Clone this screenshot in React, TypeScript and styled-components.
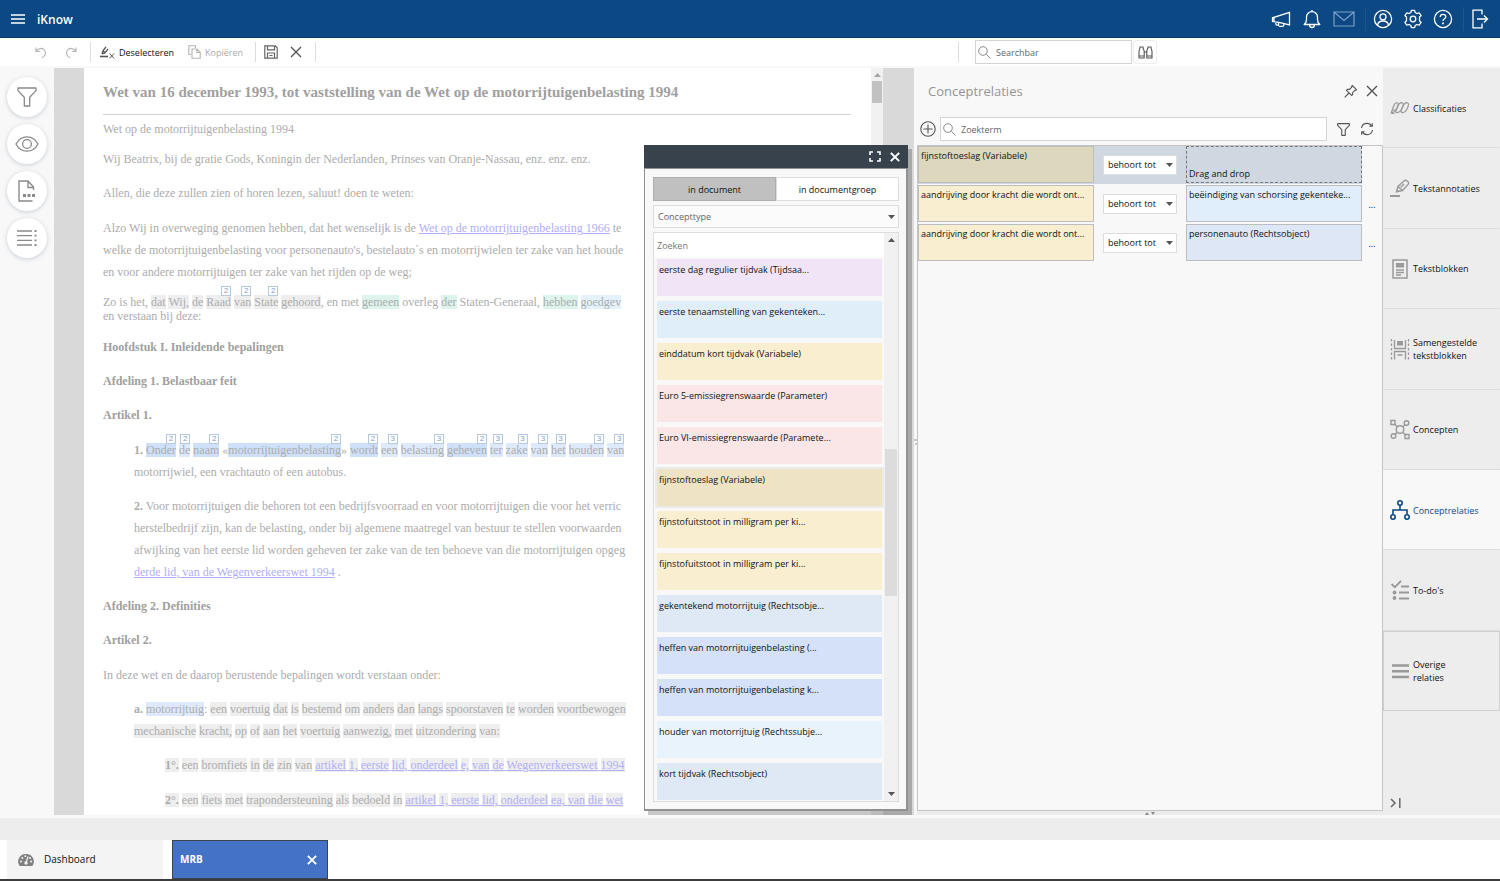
import React from 'react';
import styled, { createGlobalStyle, css } from 'styled-components';

const Global = createGlobalStyle`
  * { box-sizing: border-box; }
  body { margin: 0; background: #fff; }
  body, button, input, select {
    font-family: 'Open Sans', 'Noto Sans', sans-serif;
    font-size: 9px;
    line-height: 13px;
    color: #111;
  }
  button { border: 0; padding: 0; background: none; cursor: pointer; }
  ul { list-style: none; margin: 0; padding: 0; }
`;

/* ---------- icons ---------- */

type IconProps = { w?: number; h?: number; box?: string; sw?: number; color?: string; children: React.ReactNode };

const Svg = styled.svg`
  display: block;
  flex: none;
`;

const Icon = ({ w = 16, h, box, sw = 1, color = 'currentColor', children }: IconProps) => (
  <Svg
    width={w}
    height={h ?? w}
    viewBox={box ?? `0 0 ${w} ${h ?? w}`}
    fill="none"
    stroke={color}
    strokeWidth={sw}
    aria-hidden="true"
  >
    {children}
  </Svg>
);

const MenuIcon = () => (
  <Icon w={14} h={12} sw={1.600}><path d="M0 2h14M0 6h14M0 10h14" /></Icon>
);
const MegaphoneIcon = () => (
  <Icon w={20} h={18} sw={1.300}>
    <path d="M18.500 2.500v12.500L9 12.600 1.500 11.500V7.800L18.500 2.500ZM3 7.300v4.500M4.800 12.200v1.600c0 .8.400 1.300 1.200 1.300h1.500c.3 1 .8 1.300 1.500 1.300h2.500c.8 0 1.300-.5 1.300-1.300v-1.600M7.500 15.100v-2.600" />
  </Icon>
);
const BellIcon = () => (
  <Icon w={18} h={20} sw={1.300}>
    <path d="M9 1v1.500M1.200 15.500h15.600c-1.700-1.500-2.300-3-2.300-5V8.300C14.500 5 12 2.700 9 2.700S3.500 5 3.500 8.300v2.200c0 2-.6 3.500-2.300 5ZM6.500 15.800c0 1.700 1 2.700 2.500 2.700s2.500-1 2.500-2.700" strokeLinejoin="round" />
  </Icon>
);
const MailIcon = () => (
  <Icon w={22} h={16} sw={1.200} color="#7f9fc4"><path d="M1 1h20v14H1ZM1 1l10 8.500L21 1" /></Icon>
);
const UserIcon = () => (
  <Icon w={20} sw={1.300}>
    <circle cx="10" cy="10" r="8.600" /><circle cx="10" cy="7.800" r="3" />
    <path d="M4.600 16.300c.2-2.800 2-4.300 5.400-4.300s5.200 1.500 5.400 4.300" />
  </Icon>
);
const GearIcon = () => (
  <Icon w={20} sw={1.300}>
    <path strokeLinejoin="round" d="M8.400 1.300h3.200l.6 2.200 1.700 1 2.300-.7 1.900 2.700-1.600 1.700v3.600l1.600 1.700-1.900 2.700-2.300-.7-1.700 1-.6 2.200H8.400l-.6-2.200-1.700-1-2.300.7-1.900-2.700 1.600-1.700V8.200L1.900 6.500l1.900-2.700 2.300.7 1.700-1Z" />
    <circle cx="10" cy="10" r="2.800" />
  </Icon>
);
const HelpIcon = () => (
  <Icon w={20} sw={1.300}>
    <circle cx="10" cy="10" r="8.600" />
    <path d="M7.200 8c0-1.700 1.100-2.700 2.800-2.700s2.800 1 2.800 2.500c0 2-2.800 2-2.800 4.200" />
    <path d="M10 13.600v1.600" strokeWidth={1.800} />
  </Icon>
);
const LogoutIcon = () => (
  <Icon w={18} h={20} sw={1.300}>
    <path d="M11 5.500V1.200H2v17.600h9v-4.300M6 10h10.500M13 6.500l3.500 3.500-3.500 3.500" />
  </Icon>
);
const UndoIcon = () => (
  <Icon w={12} h={13} sw={1.200} color="#b5b5b5"><path d="M1 1.500v4h4M1.200 5.300C3.500 2 7 1.800 9 3.600c2.300 2 2.300 6-2 8.200" /></Icon>
);
const RedoIcon = () => (
  <Icon w={12} h={13} sw={1.200} color="#b5b5b5"><path d="M11 1.500v4H7M10.800 5.300C8.500 2 5 1.800 3 3.600c-2.300 2-2.300 6 2 8.200" /></Icon>
);
const DeselectIcon = () => (
  <Icon w={15} h={13} sw={1} color="#555">
    <path d="M0 10.500h8" strokeWidth={1.600} />
    <path d="M2 8 3 4.800 6 .8M3 4.800 5 6.800 8 3M2 8l3-1.200" strokeWidth={1.300} />
    <path d="m9.500 7.500 4.500 4.800M14 7.500l-4.500 4.800" />
  </Icon>
);
const CopyIcon = () => (
  <Icon w={13} h={14} sw={1.100} color="#b5b5b5">
    <path d="M3 9.500H.8V.8h6.700V3M4 4h5l3.200 3.200v6H4ZM8.800 4v3.500h3.400" />
  </Icon>
);
const SaveIcon = () => (
  <Icon w={14} sw={1.200} color="#666">
    <path d="M.8.8h10.400l2 2v10.400H.8ZM3.500.8v4h7V.8M3.500 13V8h7v5M5.500 10.500h3" />
  </Icon>
);
const CloseIcon = ({ w = 12, sw = 1.400, color = '#555' }: { w?: number; sw?: number; color?: string }) => (
  <Icon w={w} box="0 0 12 12" sw={sw} color={color}><path d="m1 1 10 10M11 1 1 11" /></Icon>
);
const SearchIcon = () => (
  <Icon w={13} sw={1} color="#8a8a8a"><circle cx="5" cy="5" r="4.300" /><path d="m8.300 8.300 4.200 4.200" /></Icon>
);
const BinocularsIcon = () => (
  <Icon w={15} h={13} sw={1.100} color="#555">
    <path d="M1 12V5.500C1 4 2 3.500 2 1h3c0 2.500 1.200 3 1.200 4.500V12ZM8.800 12V5.500C8.800 4 10 3.500 10 1h3c0 2.500 1 3 1 4.500V12ZM6.200 6h2.600M1 10h5.200M8.800 10H14" />
  </Icon>
);
const FunnelIcon = ({ w, color }: { w: number; color: string }) => (
  <Icon w={w} box="0 0 20 20" sw={w > 14 ? 1.300 : 1.700} color={color}>
    <path strokeLinejoin="round" d="M1 1h18v2.600l-6.300 6.600V19H7.300v-8.800L1 3.600Z" />
  </Icon>
);
const EyeIcon = () => (
  <Icon w={24} h={18} sw={1.300} color="#8a8a8a">
    <path d="M1 9c5-9.600 17-9.600 22 0-5 9.600-17 9.600-22 0Z" /><circle cx="12" cy="9" r="4.400" />
  </Icon>
);
const FileIcon = () => (
  <Icon w={18} h={22} sw={1.400} color="#8a8a8a">
    <path d="M14.500 21H1V1h9l5.500 6v3M10 1v6.500h5.500" />
    <path d="M5 15.500h3M9.500 15.500h3M14 15.500h3" strokeWidth={3} />
  </Icon>
);
const ListIcon = () => (
  <Icon w={20} h={18} sw={1.300} color="#8a8a8a">
    <path d="M0 2h15M0 6.600h15M0 11.400h15M0 16h15" />
    <path d="M17.500 2h2M17.500 6.600h2M17.500 11.400h2M17.500 16h2" strokeWidth={1.800} />
  </Icon>
);
const ExpandIcon = () => (
  <Icon w={12} h={11} sw={1.600} color="#fff"><path d="M1 4V1h3M8 1h3v3M11 7v3H8M4 10H1V7" /></Icon>
);
const PinIcon = () => (
  <Icon w={14} sw={1.100} color="#555">
    <path d="m8.300 1.500 4.200 4.200-1 .8-.7-.2L8.600 8.600l.1 2-1 .9L2.500 6.300l1-1 2 .1 2.300-2.300-.2-.8ZM5 9l-4.300 4.300" />
  </Icon>
);
const PlusCircleIcon = () => (
  <Icon w={16} sw={1.100} color="#555"><circle cx="8" cy="8" r="7.200" /><path d="M3.500 8h9M8 3.500v9" /></Icon>
);
const RefreshIcon = () => (
  <Icon w={14} sw={1.100} color="#555">
    <path d="M1.500 6C2 3 4.300 1.400 7 1.400c2 0 3.800 1 4.800 2.700M12.500 8c-.5 3-2.800 4.600-5.500 4.600-2 0-3.800-1-4.800-2.700M12.300 1.300v3H9.300M1.700 12.700v-3h3" />
  </Icon>
);
const CaretIcon = () => (
  <Icon w={7} h={4}><path d="M0 0h7L3.500 4Z" fill="#555" stroke="none" /></Icon>
);
const CaretUpIcon = ({ color = '#555' }: { color?: string }) => (
  <Icon w={7} h={4}><path d="M0 4h7L3.500 0Z" fill={color} stroke="none" /></Icon>
);
const GaugeIcon = () => (
  <Icon w={16} h={14}>
    <path d="M8 1a7.500 7.500 0 0 0-6.300 12h12.600A7.500 7.500 0 0 0 8 1Z" fill="#808080" stroke="none" />
    <path d="M8.300 9 10 3.500" stroke="#f4f4f4" strokeWidth={1.200} />
    <g fill="#f4f4f4" stroke="none">
      <circle cx="8" cy="10" r="1.700" /><circle cx="3" cy="8.500" r="1" /><circle cx="4.300" cy="5" r="1" />
      <circle cx="7.300" cy="3.200" r=".9" /><circle cx="12" cy="5" r="1" /><circle cx="13" cy="8.500" r="1" />
    </g>
  </Icon>
);
const CollapseIcon = () => (
  <Icon w={11} h={10} sw={1.500} color="#666"><path d="m1 1 4 4-4 4M9.800 0v10" /></Icon>
);

/* One leaning leaf, repeated three times. */
const ClassesIcon = () => (
  <Icon w={20} h={14} sw={1.200}>
    <path d="M1 12.500 3.500 5.500C4.500 2.500 6 1.500 7.200 1.800s1.300 2 .3 4.500-2.500 4.700-4.500 5H1.500" />
    <path d="M6 11.500c-.8-1 .5-4 1.500-6C9 2.500 11 1.500 12.300 1.800s1.300 2 .3 4.500-3 5-5 5.200c-.8.100-1.300.100-1.600 0Z" />
    <path d="M11.500 11.500c-.8-1 .2-4 1.200-6 1.500-3 3.500-4 4.800-3.700s1.300 2 .3 4.500-2.700 5-4.700 5.200c-.8.100-1.300.100-1.600 0Z" />
    <path d="M1.500 12.500h3M2.500 9h3" />
  </Icon>
);
const MarkerIcon = () => (
  <Icon w={20} h={19} sw={1.400}>
    <path d="M0 17h10" strokeWidth={2} />
    <path d="M6.500 12.800 8 7.500 14.500 1.500c1.200-1 4.800 1.200 4 3.500L12.500 11.500ZM8 7.500l4.500 4M10.800 8.300 14 5" />
  </Icon>
);
const BlockIcon = () => (
  <Icon w={20} sw={1.500}>
    <path d="M3 1h14v18H3Z" /><path d="M6 4h8v4.500H6Z" fill="currentColor" stroke="none" /><path d="M6 11h8M6 13.500h8M6 16h5" />
  </Icon>
);
const ComposedIcon = () => (
  <Icon w={20} h={21} sw={1.300}>
    <path d="M1.500 0v21M18.500 0v21" strokeDasharray="2.500 2" /><path d="M4.500 1v8.500h11V1M4.500 20.500V12.500h11v8M7.500 16h5" />
    <path d="M7 2h6v4.500H7Z" fill="currentColor" stroke="none" />
  </Icon>
);
const ConceptsIcon = () => (
  <Icon w={20} h={21} sw={1.400}>
    <circle cx="10" cy="10.500" r="3.800" /><path d="M1 1.500h4v4H1ZM15 15.500h4v4h-4Z" /><circle cx="16.500" cy="4" r="2.300" /><circle cx="3.500" cy="17" r="2.300" />
    <path d="m5 5.500 2.400 2.300M15 5.700l-2.300 2.200M5 15.500l2.400-2.300M15 15.500l-2.300-2.300" />
  </Icon>
);
const RelationsIcon = () => (
  <Icon w={20} sw={1.600}>
    <circle cx="10" cy="3" r="2.200" /><circle cx="3" cy="17" r="2.200" /><circle cx="17" cy="17" r="2.200" />
    <path d="M10 5.200V10M3 14.800V10h14v4.800" />
  </Icon>
);
const TodoIcon = () => (
  <Icon w={20} sw={1.800}>
    <path d="m1.500 4 3.300 3.200L11 1M11 6.500h8M9 12.500h10M9 18.500h10" />
    <circle cx="4.500" cy="12.500" r="1.900" fill="currentColor" stroke="none" /><circle cx="4.500" cy="18" r="1.900" fill="currentColor" stroke="none" />
  </Icon>
);
const BarsIcon = () => (
  <Icon w={20} h={16} sw={2.400}><path d="M2 2.500h17M2 8.200h17M2 14h17" /></Icon>
);

/* ---------- frame ---------- */

const Page = styled.div`
  display: flex;
  flex-direction: column;
  height: 100vh;
  min-height: 640px;
  background: #f8f8f8;
`;

const TopBar = styled.header`
  display: flex;
  align-items: center;
  flex: none;
  height: 38px;
  padding: 0 11px;
  gap: 10px;
  background: #0b4884;
  border-bottom: 1px solid #083a72;
  color: #fff;
  button { color: inherit; }
`;

const Brand = styled.h1`
  flex: 1;
  margin: 0;
  padding: 3px 0 0 2px;
  font-size: 12px;
  line-height: 16px;
  font-weight: 600;
`;

const TopActions = styled.div<{ $divided?: boolean }>`
  display: flex;
  align-items: center;
  gap: ${(p) => (p.$divided ? 10 : 12)}px;
  ${(p) => p.$divided && css`
    border-left: 1px solid #1d558e;
    padding-left: 7px;
    height: 24px;
  `}
`;

const ToolBar = styled.div`
  display: flex;
  align-items: stretch;
  flex: none;
  height: 28px;
  margin-bottom: 2px;
  background: #fff;
`;

const Tools = styled.div`
  display: flex;
  align-items: center;
  flex: 1;
`;

const ToolGroup = styled.div<{ $gap: number; $start: number; $end: number }>`
  display: flex;
  align-items: center;
  height: 20px;
  gap: ${(p) => p.$gap}px;
  padding: 0 ${(p) => p.$end}px 0 ${(p) => p.$start}px;
  border-right: 1px solid #ddd;
`;

const ToolSearch = styled.div`
  display: flex;
  align-items: center;
  gap: 1px;
  flex: 0 0 542px;
  &::before {
    content: '';
    height: 20px;
    margin-right: 15px;
    border-left: 1px solid #ddd;
  }
`;

const ToolButton = styled.button<{ $muted?: boolean }>`
  display: flex;
  align-items: center;
  gap: 4px;
  color: ${(p) => (p.$muted ? '#aaa' : '#111')};
`;

const SearchField = styled.label<{ $w?: number }>`
  display: flex;
  align-items: center;
  gap: 5px;
  height: 24px;
  padding: 0 2px;
  border: 1px solid #d5d5d5;
  background: #fff;
  ${(p) => (p.$w ? `width: ${p.$w}px;` : 'flex: 1;')}
  input {
    flex: 1;
    min-width: 0;
    border: 0;
    padding: 0;
    outline: 0;
    background: none;
  }
  input::placeholder { color: #666; opacity: 1; }
`;

const ScopeButton = styled.button`
  display: grid;
  place-items: center;
  width: 24px;
  height: 24px;
  border: 1px solid #eee;
  border-radius: 3px;
`;

const Main = styled.main`
  display: flex;
  flex: 1;
  min-height: 0;
`;

const Rail = styled.nav`
  display: flex;
  flex-direction: column;
  align-items: center;
  gap: 7px;
  flex: 0 0 54px;
  padding-top: 9px;
`;

const RailButton = styled.button`
  display: grid;
  place-items: center;
  width: 40px;
  height: 40px;
  border-radius: 50%;
  background: #fff;
  box-shadow: 0 1px 4px rgba(60, 80, 110, 0.25);
`;

/* ---------- document ---------- */

const DocArea = styled.section`
  position: relative;
  display: flex;
  flex: 1;
  min-width: 0;
  padding: 0 31px 0 30px;
  background: #d9d9d9;
`;

const Paper = styled.article`
  flex: 1;
  min-width: 0;
  overflow: hidden;
  padding: 13px 20px 0 19px;
  background: #fff;
  font-family: 'Liberation Serif', 'Times New Roman', serif;
  font-size: 12px;
  line-height: 22px;
  color: #acacac;
  white-space: nowrap;
`;

const DocTitle = styled.h2`
  margin: 0 0 3px;
  padding-bottom: 11px;
  border-bottom: 1px solid #d2d2d2;
  font-size: 15px;
  line-height: 22px;
  color: #a0a0a0;
`;

const Para = styled.p<{ $level?: number; $tight?: boolean; $gap?: number }>`
  margin: 0 0 ${(p) => p.$gap ?? 12}px ${(p) => (p.$level ?? 0) * 31}px;
  ${(p) => p.$tight && 'line-height: 14px;'}
`;

const DocHeading = styled.h3<{ $gap?: number }>`
  margin: 0 0 ${(p) => p.$gap ?? 12}px;
  font-size: 12px;
  line-height: 22px;
  color: #a0a0a0;
`;

const DocLink = styled.a`
  color: #b0aef6;
  text-decoration: underline;
`;

const tones = {
  grey: '#eeeeee',
  green: '#dcf4ec',
  sky: '#e4f2fb',
  blue: '#cfe0fa',
  pale: '#deeafb',
};
type Tone = keyof typeof tones;

const Mark = styled.span<{ $tone: Tone }>`
  position: relative;
  background: ${(p) => tones[p.$tone]};
`;

const CountBadge = styled.sup`
  position: absolute;
  right: 0;
  top: -9px;
  width: 10px;
  height: 10px;
  border: 1px solid #b4c8e0;
  background: #fff;
  font: 8px/8px 'Liberation Sans', Arial, sans-serif;
  text-align: center;
  color: #7fa0cc;
`;

/* Wraps every word in its own highlight; "word^2" adds a count badge. */
const Marked = ({ tone, text }: { tone: Tone; text: string }) => (
  <>
    {text.split(' ').map((word, i) => {
      const [label, count] = word.split('^');
      return (
        <React.Fragment key={i}>
          {i > 0 && ' '}
          <Mark $tone={tone}>
            {label}
            {count && <CountBadge>{count}</CountBadge>}
          </Mark>
        </React.Fragment>
      );
    })}
  </>
);

const ScrollTrack = styled.div<{ $w: number; $thumbTop: number; $thumb: number; $thumbColor: string }>`
  display: flex;
  flex-direction: column;
  align-items: center;
  justify-content: space-between;
  flex: 0 0 ${(p) => p.$w}px;
  padding: 5px 0;
  background:
    linear-gradient(${(p) => p.$thumbColor}, ${(p) => p.$thumbColor}) center ${(p) => p.$thumbTop}px / calc(100% - 2px) ${(p) => p.$thumb}px no-repeat,
    #f1f1f1;
`;

/* ---------- concept dialog ---------- */

const Dialog = styled.div`
  position: absolute;
  top: 77px;
  right: 6px;
  bottom: 4px;
  display: flex;
  flex-direction: column;
  width: 264px;
  border: 1px solid #8f9295;
  border-width: 0 2px 2px 1px;
  background: #f8f8f8;
  box-shadow: 4px 4px 0 rgba(0, 0, 0, 0.22);
`;

const DialogBar = styled.div`
  display: flex;
  align-items: center;
  justify-content: flex-end;
  gap: 9px;
  flex: none;
  height: 24px;
  margin: 0 -2px 0 -1px;
  padding-right: 8px;
  background: #37424c;
  border-bottom: 1px solid #8f9295;
`;

const DialogBody = styled.div`
  display: flex;
  flex-direction: column;
  flex: 1;
  gap: 4px;
  min-height: 0;
  padding: 8px 7px 7px 8px;
`;

const TabRow = styled.div`
  display: grid;
  grid-template-columns: 1fr 1fr;
  flex: none;
  height: 24px;
`;

const Tab = styled.button<{ $on?: boolean }>`
  border: 1px solid ${(p) => (p.$on ? '#adadad' : '#ddd')};
  background: ${(p) => (p.$on ? '#c0c0c0' : '#fff')};
`;

const SelectBox = styled.div<{ $muted?: boolean; $h: number }>`
  position: relative;
  display: flex;
  align-items: center;
  flex: none;
  height: ${(p) => p.$h}px;
  border: 1px solid #ddd;
  background: ${(p) => (p.$muted ? '#fbfbfb' : '#fff')};
  select {
    appearance: none;
    width: 100%;
    height: 100%;
    border: 0;
    padding: 0 4px;
    outline: 0;
    background: none;
    color: ${(p) => (p.$muted ? '#666' : '#111')};
  }
  svg {
    position: absolute;
    right: 3px;
    pointer-events: none;
  }
`;

const ListFrame = styled.div`
  display: flex;
  flex: 1;
  min-height: 0;
  border: 1px solid #ddd;
`;

const ListColumn = styled.div`
  display: flex;
  flex-direction: column;
  flex: 1;
  min-width: 0;
  overflow: hidden;
`;

const ListSearch = styled.input`
  flex: none;
  width: 100%;
  height: 24px;
  border: 0;
  padding: 0 3px;
  outline: 0;
  background: #fff;
  &::placeholder { color: #777; opacity: 1; }
`;

const ConceptList = styled.ul`
  display: flex;
  flex-direction: column;
  gap: 5px;
  padding: 2px 2px 0 3px;
`;

const ConceptItem = styled.li<{ $bg: string; $on?: boolean }>`
  flex: none;
  height: 37px;
  padding: 4px 2px;
  background: ${(p) => p.$bg};
  ${(p) => p.$on && 'box-shadow: 0 0 0 2px #ebebeb;'}
`;

/* ---------- relations panel ---------- */

const Splitter = styled.div`
  display: flex;
  flex-direction: column;
  align-items: center;
  justify-content: center;
  flex: 0 0 3px;
`;

const HSplitter = styled.div`
  display: flex;
  align-items: center;
  justify-content: center;
  flex: 0 0 4px;
  background: #ebebeb;
`;

const Panel = styled.section`
  display: flex;
  flex-direction: column;
  flex: 0 0 466px;
`;

const PanelHead = styled.div`
  display: flex;
  align-items: center;
  gap: 8px;
  height: 45px;
  padding: 0 5px 0 11px;
`;

const PanelTitle = styled.h2`
  flex: 1;
  margin: 0;
  font-size: 13px;
  line-height: 18px;
  font-weight: 400;
  color: #959595;
`;

const PanelSearch = styled.div`
  display: flex;
  align-items: center;
  height: 32px;
  gap: 10px;
  padding: 0 9px 0 3px;
`;

const FieldPair = styled.div`
  display: flex;
  align-items: center;
  flex: 1;
  gap: 4px;
`;

const Relations = styled.ul`
  display: flex;
  flex-direction: column;
  flex: 1;
  gap: 1px;
  border: 1px solid #c4c4c4;
`;

const Relation = styled.li`
  display: grid;
  grid-template-columns: 1fr 20px;
  align-items: center;
`;

const RelationBody = styled.div<{ $on?: boolean }>`
  display: grid;
  grid-template-columns: 1fr 74px 1fr;
  align-items: center;
  column-gap: 9px;
  height: 38px;
  padding-bottom: 1px;
  background: ${(p) => (p.$on ? '#cfd8e0' : 'transparent')};
`;

const Term = styled.div<{ $bg: string; $drop?: boolean }>`
  display: flex;
  align-items: ${(p) => (p.$drop ? 'flex-end' : 'flex-start')};
  height: 37px;
  min-width: 0;
  padding: 2px;
  border: 1px ${(p) => (p.$drop ? 'dashed #777' : 'solid #bdbdbd')};
  background: ${(p) => p.$bg};
  white-space: nowrap;
  overflow: hidden;
`;

const MoreButton = styled.button`
  height: 20px;
`;

/* ---------- side tabs ---------- */

const Side = styled.aside`
  display: flex;
  flex-direction: column;
  justify-content: space-between;
  flex: 0 0 117px;
  background: #ededed;
`;

const SideTabs = styled.nav`
  display: flex;
  flex-direction: column;
  height: 643px;
`;

const SideTab = styled.button<{ $on?: boolean; $boxed?: boolean }>`
  display: flex;
  align-items: center;
  flex: 1;
  gap: 3px;
  padding: 0 6px;
  text-align: left;
  border: 1px solid ${(p) => (p.$boxed ? '#d0d0d0' : 'transparent')};
  border-bottom-color: ${(p) => (p.$boxed ? '#d0d0d0' : '#dcdcdc')};
  background: ${(p) => (p.$on ? '#f8f8f8' : 'transparent')};
  color: ${(p) => (p.$on ? '#0b4884' : '#111')};
  span { width: min-content; white-space: normal; }
  svg { color: ${(p) => (p.$on ? '#0b4884' : '#999')}; }
`;

const CollapseButton = styled.button`
  align-self: flex-start;
  padding: 7px;
`;

/* ---------- footer ---------- */

const StatusStrip = styled.div`
  flex: none;
  height: 22px;
  margin-top: 3px;
  background: #ededed;
`;

const TaskBar = styled.footer`
  display: flex;
  flex: none;
  gap: 9px;
  height: 41px;
  padding-left: 7px;
  background: #fff;
  border-bottom: 2px solid #3c3c3c;
`;

const Task = styled.div<{ $on?: boolean }>`
  display: flex;
  align-items: center;
  gap: 10px;
  width: 156px;
  padding: 0 10px 0 ${(p) => (p.$on ? 7 : 11)}px;
  background: ${(p) => (p.$on ? '#4472c4' : '#f4f4f4')};
  ${(p) => p.$on && css`
    border: 1px solid #3c4450;
    color: #fff;
    font-weight: 700;
    justify-content: space-between;
  `}
`;

const TaskLink = styled.button`
  color: inherit;
  font-weight: inherit;
  font-size: 10px;
`;

/* ---------- data ---------- */

const concepts = [
  { name: 'eerste dag regulier tijdvak (Tijdsaa...', bg: '#f0e4f6' },
  { name: 'eerste tenaamstelling van gekenteken...', bg: '#e0eefa' },
  { name: 'einddatum kort tijdvak (Variabele)', bg: '#f9eecf' },
  { name: 'Euro 5-emissiegrenswaarde (Parameter)', bg: '#fae6e7' },
  { name: 'Euro VI-emissiegrenswaarde (Paramete...', bg: '#fae6e7' },
  { name: 'fijnstoftoeslag (Variabele)', bg: '#eee3c5', on: true },
  { name: 'fijnstofuitstoot in milligram per ki...', bg: '#f9eecf' },
  { name: 'fijnstofuitstoot in milligram per ki...', bg: '#f9eecf' },
  { name: 'gekentekend motorrijtuig (Rechtsobje...', bg: '#dee9f5' },
  { name: 'heffen van motorrijtuigenbelasting (...', bg: '#d4e1f9' },
  { name: 'heffen van motorrijtuigenbelasting k...', bg: '#d4e1f9' },
  { name: 'houder van motorrijtuig (Rechtssubje...', bg: '#e9f3fb' },
  { name: 'kort tijdvak (Rechtsobject)', bg: '#dee9f5' },
];

const relations = [
  { from: 'fijnstoftoeslag (Variabele)', fromBg: '#dcd7bd', to: 'Drag and drop', toBg: '#cfd8e0', on: true },
  { from: 'aandrijving door kracht die wordt ont...', fromBg: '#f9eecf', to: 'beëindiging van schorsing gekenteke...', toBg: '#dfeefa' },
  { from: 'aandrijving door kracht die wordt ont...', fromBg: '#f9eecf', to: 'personenauto (Rechtsobject)', toBg: '#dde7f5' },
];

const sideTabs = [
  { label: 'Classificaties', icon: <ClassesIcon /> },
  { label: 'Tekstannotaties', icon: <MarkerIcon /> },
  { label: 'Tekstblokken', icon: <BlockIcon /> },
  { label: 'Samengestelde tekstblokken', icon: <ComposedIcon /> },
  { label: 'Concepten', icon: <ConceptsIcon /> },
  { label: 'Conceptrelaties', icon: <RelationsIcon />, on: true },
  { label: 'To\u2011do\'s', icon: <TodoIcon /> },
  { label: 'Overige relaties', icon: <BarsIcon />, boxed: true },
];

const LawText = () => (
  <Paper>
    <DocTitle>Wet van 16 december 1993, tot vaststelling van de Wet op de motorrijtuigenbelasting 1994</DocTitle>
    <Para $gap={8}>Wet op de motorrijtuigenbelasting 1994</Para>
    <Para>Wij Beatrix, bij de gratie Gods, Koningin der Nederlanden, Prinses van Oranje-Nassau, enz. enz. enz.</Para>
    <Para $gap={13}>Allen, die deze zullen zien of horen lezen, saluut! doen te weten:</Para>
    <Para>
      Alzo Wij in overweging genomen hebben, dat het wenselijk is de{' '}
      <DocLink href="#wet-1966">Wet op de motorrijtuigenbelasting 1966</DocLink> te<br />
      welke de motorrijtuigenbelasting voor personenauto's, bestelauto´s en motorrijwielen ter zake van het houde<br />
      en voor andere motorrijtuigen ter zake van het rijden op de weg;
    </Para>
    <Para $tight $gap={13}>
      Zo is het, <Marked tone="grey" text="dat Wij, de Raad^2 van^2 State^2 gehoord" />, en met{' '}
      <Marked tone="green" text="gemeen" /> overleg <Marked tone="green" text="der" /> Staten-Generaal,{' '}
      <Marked tone="green" text="hebben" /> <Marked tone="sky" text="goedgev" /><br />
      en verstaan bij deze:
    </Para>
    <DocHeading>Hoofdstuk I. Inleidende bepalingen</DocHeading>
    <DocHeading>Afdeling 1. Belastbaar feit</DocHeading>
    <DocHeading $gap={13}>Artikel 1.</DocHeading>
    <Para $level={1}>
      <b>1.</b> <Marked tone="blue" text="Onder^2" /> <Marked tone="pale" text="de^2" />{' '}
      <Marked tone="blue" text="naam^2" /> «<Marked tone="blue" text="motorrijtuigenbelasting^2" />»{' '}
      <Marked tone="blue" text="wordt^2" /> <Marked tone="pale" text="een^3 belasting^3" />{' '}
      <Marked tone="blue" text="geheven^2" /> <Marked tone="pale" text="ter^3 zake^3 van^3 het^3 houden^3 van^3" /><br />
      motorrijwiel, een vrachtauto of een autobus.
    </Para>
    <Para $level={1}>
      <b>2.</b> Voor motorrijtuigen die behoren tot een bedrijfsvoorraad en voor motorrijtuigen die voor het verric<br />
      herstelbedrijf zijn, kan de belasting, onder bij algemene maatregel van bestuur te stellen voorwaarden<br />
      afwijking van het eerste lid worden geheven ter zake van de ten behoeve van die motorrijtuigen opgeg<br />
      <DocLink href="#wegenverkeerswet">derde lid, van de Wegenverkeerswet 1994</DocLink> .
    </Para>
    <DocHeading>Afdeling 2. Definities</DocHeading>
    <DocHeading $gap={13}>Artikel 2.</DocHeading>
    <Para>In deze wet en de daarop berustende bepalingen wordt verstaan onder:</Para>
    <Para $level={1}>
      <b>a.</b> <Marked tone="pale" text="motorrijtuig" />:{' '}
      <Marked tone="grey" text="een voertuig dat is bestemd om anders dan langs spoorstaven te worden voortbewogen" /><br />
      <Marked tone="grey" text="mechanische kracht, op of aan het voertuig aanwezig, met uitzondering van:" />
    </Para>
    <Para $level={2} $gap={13}>
      <b><Marked tone="grey" text="1°." /></b> <Marked tone="grey" text="een bromfiets in de zin van" />{' '}
      <DocLink href="#artikel-1e"><Marked tone="grey" text="artikel 1, eerste lid, onderdeel e, van de Wegenverkeerswet 1994" /></DocLink>
    </Para>
    <Para $level={2}>
      <b><Marked tone="grey" text="2°." /></b> <Marked tone="grey" text="een fiets met trapondersteuning als bedoeld in" />{' '}
      <DocLink href="#artikel-1ea"><Marked tone="grey" text="artikel 1, eerste lid, onderdeel ea, van die wet" /></DocLink>
    </Para>
  </Paper>
);

const ConceptDialog = () => (
  <Dialog role="dialog" aria-label="Concepten">
    <DialogBar>
      <button aria-label="Maximaliseren"><ExpandIcon /></button>
      <button aria-label="Sluiten"><CloseIcon w={10} sw={2.400} color="#fff" /></button>
    </DialogBar>
    <DialogBody>
      <TabRow role="tablist">
        <Tab role="tab" aria-selected $on>in document</Tab>
        <Tab role="tab" aria-selected={false}>in documentgroep</Tab>
      </TabRow>
      <SelectBox $h={23} $muted>
        <select aria-label="Concepttype"><option>Concepttype</option></select>
        <CaretIcon />
      </SelectBox>
      <ListFrame>
        <ListColumn>
          <ListSearch aria-label="Zoeken" placeholder="Zoeken" />
          <ConceptList>
            {concepts.map((c, i) => (
              <ConceptItem key={i} $bg={c.bg} $on={c.on}>{c.name}</ConceptItem>
            ))}
          </ConceptList>
        </ListColumn>
        <ScrollTrack $w={14} $thumbTop={216} $thumb={147} $thumbColor="#dcdcdc">
          <CaretUpIcon />
          <CaretIcon />
        </ScrollTrack>
      </ListFrame>
    </DialogBody>
  </Dialog>
);

export default function App() {
  return (
    <Page>
      <Global />
      <TopBar>
        <button aria-label="Menu"><MenuIcon /></button>
        <Brand>iKnow</Brand>
        <TopActions>
          <button aria-label="Mededelingen"><MegaphoneIcon /></button>
          <button aria-label="Meldingen"><BellIcon /></button>
          <button aria-label="Berichten"><MailIcon /></button>
        </TopActions>
        <TopActions $divided>
          <button aria-label="Profiel"><UserIcon /></button>
          <button aria-label="Instellingen"><GearIcon /></button>
          <button aria-label="Help"><HelpIcon /></button>
        </TopActions>
        <TopActions $divided>
          <button aria-label="Uitloggen"><LogoutIcon /></button>
        </TopActions>
      </TopBar>

      <ToolBar>
        <Tools>
          <ToolGroup $gap={18} $start={35} $end={13}>
            <ToolButton aria-label="Ongedaan maken"><UndoIcon /></ToolButton>
            <ToolButton aria-label="Opnieuw"><RedoIcon /></ToolButton>
          </ToolGroup>
          <ToolGroup $gap={14} $start={9} $end={12}>
            <ToolButton><DeselectIcon />Deselecteren</ToolButton>
            <ToolButton $muted><CopyIcon />Kopiëren</ToolButton>
          </ToolGroup>
          <ToolGroup $gap={12} $start={8} $end={13}>
            <ToolButton aria-label="Opslaan"><SaveIcon /></ToolButton>
            <ToolButton aria-label="Sluiten"><CloseIcon /></ToolButton>
          </ToolGroup>
        </Tools>
        <ToolSearch>
          <SearchField $w={157}>
            <SearchIcon />
            <input aria-label="Searchbar" placeholder="Searchbar" />
          </SearchField>
          <ScopeButton aria-label="Zoeken"><BinocularsIcon /></ScopeButton>
        </ToolSearch>
      </ToolBar>

      <Main>
        <Rail>
          <RailButton aria-label="Filter"><FunnelIcon w={20} color="#8a8a8a" /></RailButton>
          <RailButton aria-label="Weergave"><EyeIcon /></RailButton>
          <RailButton aria-label="Document"><FileIcon /></RailButton>
          <RailButton aria-label="Inhoud"><ListIcon /></RailButton>
        </Rail>

        <DocArea>
          <LawText />
          <ScrollTrack $w={12} $thumbTop={13} $thumb={22} $thumbColor="#c1c1c1">
            <CaretUpIcon color="#a5a5a5" />
          </ScrollTrack>
          <ConceptDialog />
        </DocArea>

        <Splitter>
          <Icon w={3} h={8}><path d="M0 2h3M1 6h2" stroke="#999" /></Icon>
        </Splitter>

        <Panel>
          <PanelHead>
            <PanelTitle>Conceptrelaties</PanelTitle>
            <button aria-label="Vastzetten"><PinIcon /></button>
            <button aria-label="Paneel sluiten"><CloseIcon /></button>
          </PanelHead>
          <PanelSearch>
            <FieldPair>
              <button aria-label="Toevoegen"><PlusCircleIcon /></button>
              <SearchField>
                <SearchIcon />
                <input aria-label="Zoekterm" placeholder="Zoekterm" />
              </SearchField>
            </FieldPair>
            <button aria-label="Filteren"><FunnelIcon w={13} color="#555" /></button>
            <button aria-label="Vernieuwen"><RefreshIcon /></button>
          </PanelSearch>
          <Relations>
            {relations.map((r, i) => (
              <Relation key={i}>
                <RelationBody $on={r.on}>
                  <Term $bg={r.fromBg}>{r.from}</Term>
                  <SelectBox $h={20}>
                    <select aria-label="Relatie"><option>behoort tot</option></select>
                    <CaretIcon />
                  </SelectBox>
                  <Term $bg={r.toBg} $drop={r.on}>{r.to}</Term>
                </RelationBody>
                {!r.on && <MoreButton aria-label="Meer">...</MoreButton>}
              </Relation>
            ))}
          </Relations>
          <HSplitter>
            <Icon w={10} h={4}><path d="M0 4h4L2 1ZM6 1h4L8 4Z" fill="#888" stroke="none" /></Icon>
          </HSplitter>
        </Panel>

        <Side>
          <SideTabs>
            {sideTabs.map((t) => (
              <SideTab key={t.label} $on={t.on} $boxed={t.boxed}>
                {t.icon}
                <span>{t.label}</span>
              </SideTab>
            ))}
          </SideTabs>
          <CollapseButton aria-label="Inklappen"><CollapseIcon /></CollapseButton>
        </Side>
      </Main>

      <StatusStrip />
      <TaskBar>
        <Task>
          <GaugeIcon />
          <TaskLink>Dashboard</TaskLink>
        </Task>
        <Task $on>
          <TaskLink>MRB</TaskLink>
          <button aria-label="MRB sluiten"><CloseIcon w={10} sw={2.200} color="#fff" /></button>
        </Task>
      </TaskBar>
    </Page>
  );
}
